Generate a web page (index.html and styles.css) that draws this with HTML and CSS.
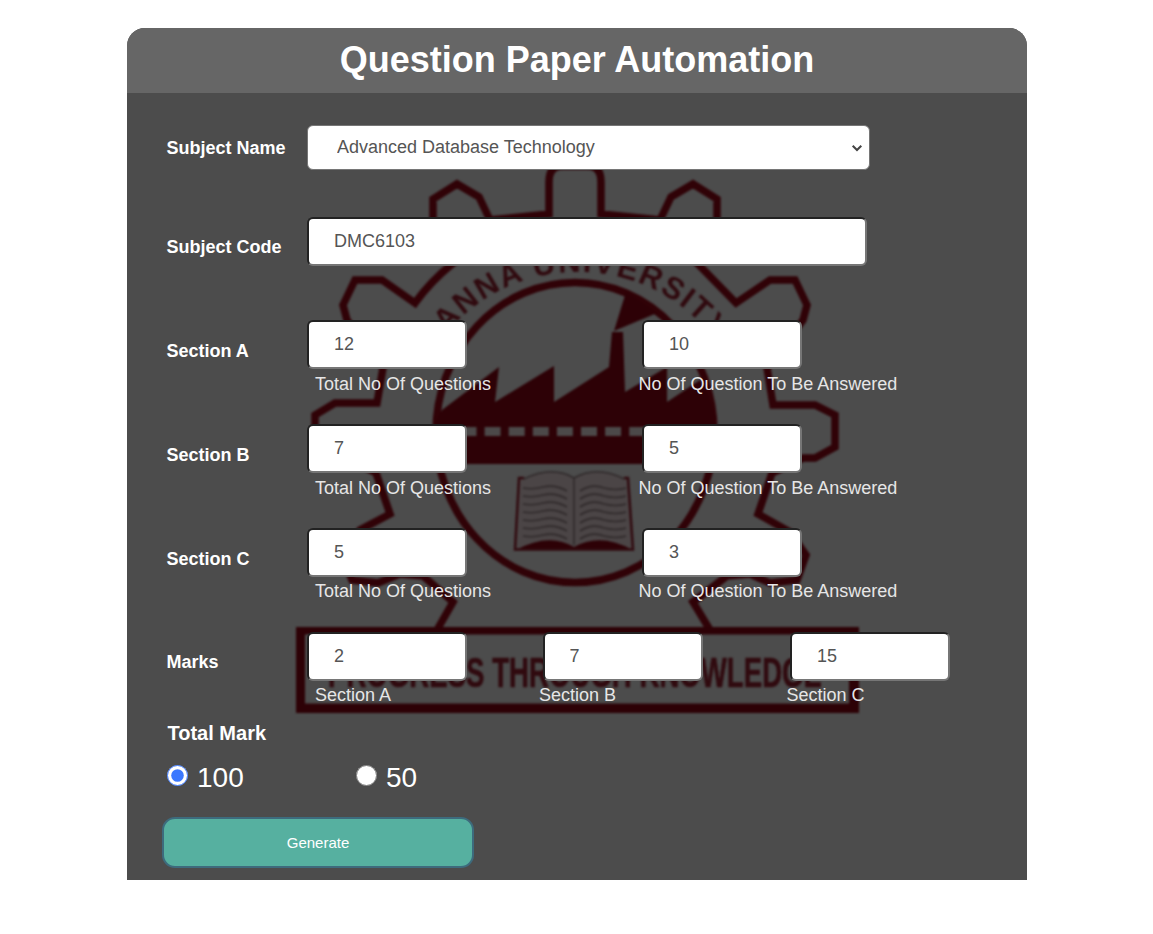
FILE: index.html
```html
<!DOCTYPE html>
<html lang="en">
<head>
<meta charset="utf-8">
<title>Question Paper Automation</title>
<link rel="stylesheet" href="styles.css">
</head>
<body>
<main class="card">
  <svg class="crest" viewBox="127 28 900 852" aria-hidden="true">
    <g class="crest-line">
      <path d="M437 630L453 602L423 576L400 574L378 583L352 580L342 555L360 530L390 514L376 473L347 458H335L315 447V415L335 403H377L383 368L347 320L343 305L355 280H382L415 303Q430 282 452 264L433 235V199L457 184L479 197L490 220L549 214V182Q549 166 562 166H588Q601 166 601 182V214L660 220L671 197L693 184L717 199V235L698 264L736 303L770 280H795L807 305L803 320L767 368L773 405H815L835 415V447L815 458H803L772 473L758 514L790 532L806 555L797 580L770 583L750 574L727 576L693 602L710 630"/>
      <ellipse cx="575" cy="432.500" rx="139" ry="150"/>
    </g>
    <path class="crest-fill" d="M437 464L435 425L442 410L499 367L495 402L554 366V402L609 367L612 332H623L625 392L667 367V402L700 380Q716 410 715 425L713 464Z"/>
    <path class="crest-fill" d="M614 331L626 292L657 313Z"/>
    <path class="crest-dash" d="M460.500 431.500H700"/>
    <path id="arch" class="crest-path" d="M411 432A167 160 0 0 1 745 432"/>
    <text class="crest-arch"><textPath href="#arch" startOffset="107" textLength="308">ANNA UNIVERSITY</textPath></text>
    <g>
      <path class="book-page" d="M520 479Q552 465 574 478Q596 465 629 479L633 549Q600 533 574 547Q548 533 516 550Z"/>
      <path class="book-cover" d="M516 550Q549 532 574 547Q600 532 633 550Z"/>
      <path class="book-edge" d="M524 478H519L515 549.500H633L628 478H624"/>
      <path class="book-rule" d="M524 479Q552 465 574 478V545M574 478Q597 465 624 479M523 488q10 2 20 -1q12 -3 24 4M523 496q10 2 20 -1q12 -3 24 4M523 504q10 2 20 -1q12 -3 24 4M523 512q10 2 20 -1q12 -3 24 4M523 520q10 2 20 -1q12 -3 24 4M523 528q10 2 20 -1q12 -3 24 4M523 536q10 2 20 -1q12 -3 24 4M580 491q12 -8 24 -3q12 3 22 0M580 499q12 -8 24 -3q12 3 22 0M580 507q12 -8 24 -3q12 3 22 0M580 515q12 -8 24 -3q12 3 22 0M580 523q12 -8 24 -3q12 3 22 0M580 531q12 -8 24 -3q12 3 22 0M580 539q12 -8 24 -3q12 3 22 0"/>
    </g>
    <path class="crest-fill" fill-rule="evenodd" d="M296 627H859V713H296ZM305 634.500V703.500H849V634.500Z"/>
    <text class="crest-motto" x="328" y="687" textLength="494" lengthAdjust="spacingAndGlyphs">PROGRESS THROUGH KNOWLEDGE</text>
  </svg>

  <header class="card-header"><h1 class="title">Question Paper Automation</h1></header>

  <form class="form">
    <div class="row row-select">
      <label class="label" for="subject">Subject Name</label>
      <div class="select-box">
        <select class="select" id="subject"><option>Advanced Database Technology</option></select>
        <svg class="chevron" viewBox="0 0 12 8" aria-hidden="true"><path d="M1.700 1.700L6 6L10.300 1.700"/></svg>
      </div>
    </div>
    <div class="row row-code">
      <label class="label" for="code">Subject Code</label>
      <input class="input input-wide" id="code" value="DMC6103">
    </div>
    <div class="row row-fields">
      <span class="label">Section A</span>
      <div class="field"><input class="input" value="12"><span class="hint">Total No Of Questions</span></div>
      <div class="field"><input class="input" value="10"><span class="hint hint-out">No Of Question To Be Answered</span></div>
    </div>
    <div class="row row-fields">
      <span class="label">Section B</span>
      <div class="field"><input class="input" value="7"><span class="hint">Total No Of Questions</span></div>
      <div class="field"><input class="input" value="5"><span class="hint hint-out">No Of Question To Be Answered</span></div>
    </div>
    <div class="row row-fields row-last">
      <span class="label">Section C</span>
      <div class="field"><input class="input" value="5"><span class="hint">Total No Of Questions</span></div>
      <div class="field"><input class="input" value="3"><span class="hint hint-out">No Of Question To Be Answered</span></div>
    </div>
    <div class="row row-fields row-last row-marks">
      <span class="label">Marks</span>
      <div class="field"><input class="input" value="2"><span class="hint">Section A</span></div>
      <div class="field"><input class="input" value="7"><span class="hint hint-out">Section B</span></div>
      <div class="field"><input class="input" value="15"><span class="hint hint-out">Section C</span></div>
    </div>
    <div class="total">Total Mark</div>
    <div class="radios">
      <label class="radio"><input class="dot" type="radio" name="total" checked>100</label>
      <label class="radio"><input class="dot" type="radio" name="total">50</label>
    </div>
    <button class="generate" type="button">Generate</button>
  </form>
</main>
</body>
</html>
```

FILE: styles.css
```css
* { box-sizing: border-box; }

body {
  margin: 0;
  padding: 28px 126px 54px 127px;
  background: #fff;
  font-family: "Liberation Sans", Arial, sans-serif;
}

.card {
  position: relative;
  width: 900px;
  height: 852px;
  background: #4c4c4c;
  border-radius: 18px 18px 0 0;
  overflow: hidden;
}

/* University crest behind the form */
.crest { position: absolute; inset: 0; width: 900px; height: 852px; filter: blur(0.8px); }
.crest-line { fill: none; stroke: #300207; stroke-width: 7.5; }
.crest-fill { fill: #2d0106; }
.crest-path { fill: none; }
.crest-dash { fill: none; stroke: #4c4949; stroke-width: 9; stroke-dasharray: 16 8.1; }
.crest-arch { font-size: 31px; font-weight: 700; fill: #300a0f; }
.crest-motto { font-size: 42px; font-weight: 700; fill: #300a0f; stroke: #300a0f; stroke-width: 0.6; }
.book-page { fill: #4b4546; }
.book-cover { fill: #2d0106; }
.book-edge { fill: none; stroke: #300a0f; stroke-width: 2.5; }
.book-rule { fill: none; stroke: #302a2b; stroke-width: 1.6; }

.card-header {
  position: relative;
  height: 65px;
  background: #666;
  text-align: center;
}
.title { margin: 0; color: #fff; font-size: 36px; line-height: 63px; }

.form { position: relative; padding: 32px 0 0 35px; }
.row { display: flex; align-items: flex-start; padding-left: 4.5px; }
.row-select { height: 92px; }
.row-code { height: 103px; }
.row-fields { height: 104px; }
.label {
  flex: none;
  width: 140.500px;
  padding-top: 21px;
  color: #fff;
  font-size: 18px;
  font-weight: 700;
  line-height: 21px;
}
.row-select .label { padding-top: 13px; }
.row-code .label, .row-marks .label { padding-top: 20px; }

.select-box { position: relative; }
.select {
  display: block;
  width: 563px;
  height: 45px;
  padding: 0 30px 2px 29px;
  border: 1px solid #767676;
  border-radius: 6px;
  appearance: none;
  background-color: #fff;
  color: #555;
  font: 18px "Liberation Sans", Arial, sans-serif;
}
.chevron {
  position: absolute;
  top: 19px;
  right: 7px;
  width: 12px;
  height: 8px;
  fill: none;
  stroke: #444;
  stroke-width: 2;
}
.input {
  display: block;
  width: 160px;
  height: 49px;
  padding: 0 0 0 25px;
  border: 2px solid;
  border-color: #222 #767676 #767676 #222;
  border-radius: 6px;
  background: #fff;
  color: #555;
  font: 18px "Liberation Sans", Arial, sans-serif;
}
.input-wide { width: 560px; }
.field { flex: none; width: 335px; }
.row-marks .field { width: 235.500px; }
.row-marks .field + .field { width: 247.500px; }
.hint {
  display: block;
  padding: 5px 0 0 8px;
  color: #e6e6e6;
  font-size: 18px;
  line-height: 21px;
  white-space: nowrap;
}
.row-last .hint { padding-top: 4px; }
.hint.hint-out { margin-left: -3.5px; padding-left: 0; }

.total {
  margin-top: -15px;
  padding-left: 5.5px;
  color: #fff;
  font-size: 20px;
  font-weight: 700;
  line-height: 24px;
}
.radios { display: flex; padding: 16px 0 0 5px; }
.radio {
  display: flex;
  width: 189px;
  color: #fff;
  font-size: 28px;
  line-height: 33px;
}
.dot { width: 21px; height: 21px; margin: 4px 9px 0 0; accent-color: #3b78ff; }
.generate {
  display: block;
  width: 312px;
  height: 51px;
  margin-top: 23px;
  border: 2px solid #3d6b7d;
  border-radius: 13px;
  background: #56b0a0;
  color: #fff;
  font: 15px "Liberation Sans", Arial, sans-serif;
}
```
